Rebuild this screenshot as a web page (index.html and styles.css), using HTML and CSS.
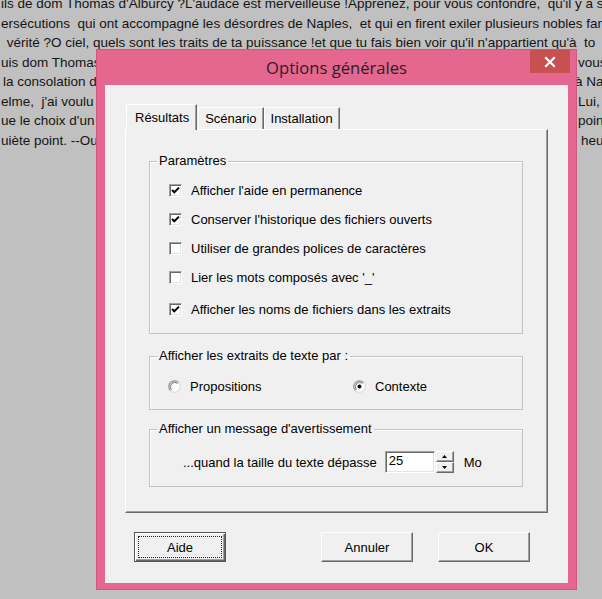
FILE: index.html
```html
<!DOCTYPE html>
<html lang="fr">
<head>
<meta charset="utf-8">
<title>Options générales</title>
<link rel="stylesheet" href="styles.css">
</head>
<body>
<div class="desk">
  <p class="line"><span class="lt">ils de dom Thomas d'Alburcy ?L'audace est merveilleuse !Apprenez, pour vous confondre,  qu'il y a s</span></p>
  <p class="line"><span class="lt">ersécutions  qui ont accompagné les désordres de Naples,  et qui en firent exiler plusieurs nobles fami</span></p>
  <p class="line"><span class="lt ind"> vérité ?O ciel, quels sont les traits de ta puissance !et que tu fais bien voir qu'il n'appartient qu'à  to</span></p>
  <p class="line split"><span class="lt">uis dom Thomas  de Piémont</span><span class="rt">vous</span></p>
  <p class="line split"><span class="lt ind">la consolation de vous</span><span class="rt early">à Na</span></p>
  <p class="line split"><span class="lt">elme,  j'ai voulu revoir</span><span class="rt">Lui,</span></p>
  <p class="line split"><span class="lt">ue le choix d'un époux</span><span class="rt">point</span></p>
  <p class="line split"><span class="lt">uiète point. --Oui, mon</span><span class="rt late">heu</span></p>
</div>

<div class="dialog">
  <div class="titlebar">
    <span class="spacer"></span>
    <span class="title">Options générales</span>
    <button class="close" type="button" aria-label="Fermer">
      <svg width="12" height="12" viewBox="0 0 12 12"><path d="M2 2L10 10M10 2L2 10" stroke="#fff" stroke-width="2.2" stroke-linecap="square"/></svg>
    </button>
  </div>
  <div class="client">
    <div class="tabs">
      <span class="tab sel">Résultats</span>
      <span class="tab">Scénario</span>
      <span class="tab">Installation</span>
    </div>
    <div class="panel">
      <fieldset class="group g1">
        <legend>Paramètres</legend>
        <div class="gbody">
          <div class="row"><span class="cb"><svg width="11" height="11" viewBox="0 0 11 11"><path d="M2 5L4.3 7.3L9 2.6" stroke="#000" stroke-width="2" fill="none"/></svg></span>Afficher l'aide en permanence</div>
          <div class="row"><span class="cb"><svg width="11" height="11" viewBox="0 0 11 11"><path d="M2 5L4.3 7.3L9 2.6" stroke="#000" stroke-width="2" fill="none"/></svg></span>Conserver l'historique des fichiers ouverts</div>
          <div class="row"><span class="cb"></span>Utiliser de grandes polices de caractères</div>
          <div class="row"><span class="cb"></span>Lier les mots composés avec '_'</div>
          <div class="row last"><span class="cb"><svg width="11" height="11" viewBox="0 0 11 11"><path d="M2 5L4.3 7.3L9 2.6" stroke="#000" stroke-width="2" fill="none"/></svg></span>Afficher les noms de fichiers dans les extraits</div>
        </div>
      </fieldset>
      <fieldset class="group g2">
        <legend>Afficher les extraits de texte par :</legend>
        <div class="gbody radios">
          <span class="radio"><svg width="13" height="13" viewBox="0 0 13 13"><circle cx="6.5" cy="6.5" r="5.8" fill="#fff" stroke="#dcdcdc" stroke-width="1.2"/><path d="M2.4 10.6A5.8 5.8 0 0 1 10.6 2.4" stroke="#9a9a9a" stroke-width="1.2" fill="none"/><path d="M3.4 9.6A4.4 4.4 0 0 1 9.6 3.4" stroke="#6e6e6e" fill="none"/></svg>Propositions</span>
          <span class="radio"><svg width="13" height="13" viewBox="0 0 13 13"><circle cx="6.5" cy="6.5" r="5.8" fill="#fff" stroke="#dcdcdc" stroke-width="1.2"/><path d="M2.4 10.6A5.8 5.8 0 0 1 10.6 2.4" stroke="#9a9a9a" stroke-width="1.2" fill="none"/><path d="M3.4 9.6A4.4 4.4 0 0 1 9.6 3.4" stroke="#6e6e6e" fill="none"/><circle cx="6.5" cy="6.5" r="2" fill="#000"/></svg>Contexte</span>
        </div>
      </fieldset>
      <fieldset class="group g3">
        <legend>Afficher un message d'avertissement</legend>
        <div class="gbody limit">
          <span class="lbl">...quand la taille du texte dépasse</span>
          <span class="field">25</span>
          <span class="spin">
            <span class="sb"><svg width="5" height="3" viewBox="0 0 5 3"><path d="M2.5 0L5 3H0z" fill="#000"/></svg></span>
            <span class="sb"><svg width="5" height="3" viewBox="0 0 5 3"><path d="M0 0H5L2.5 3z" fill="#000"/></svg></span>
          </span>
          <span class="unit">Mo</span>
        </div>
      </fieldset>
    </div>
    <div class="buttons">
      <button class="btn def" type="button"><span class="focus">Aide</span></button>
      <button class="btn annuler" type="button">Annuler</button>
      <button class="btn ok" type="button">OK</button>
    </div>
  </div>
</div>
</body>
</html>
```

FILE: styles.css
```css
html, body {
  margin: 0;
  padding: 0;
}
body {
  width: 602px;
  height: 599px;
  overflow: hidden;
  position: relative;
  background: #c0c0c0;
  font-family: "Liberation Sans", Arial, sans-serif;
  font-size: 13px;
  color: #000;
}

/* background document text */
.desk {
  margin-top: -6px;
  font-size: 13.5px;
}
.line {
  margin: 0;
  height: 19.5px;
  line-height: 19.5px;
  white-space: pre;
  overflow: hidden;
  color: #141414;
  padding-left: 1px;
}
.line.split {
  display: grid;
  grid-template-columns: 577px 1fr;
}
.lt.ind {
  padding-left: 2px;
}
.rt {
  overflow: hidden;
}
.rt.early {
  margin-left: -3px;
}
.rt.late {
  margin-left: 3px;
}

/* dialog window */
.dialog {
  position: absolute;
  left: 96px;
  top: 49px;
  width: 481px;
  height: 541px;
  box-sizing: border-box;
  background: #e5668f;
  border: 1px solid #d0577f;
  padding: 0 8px 6px 8px;
  display: flex;
  flex-direction: column;
}
.titlebar {
  height: 35px;
  margin: 0 -8px;
  display: grid;
  grid-template-columns: 1fr auto 1fr;
  align-items: center;
}
.title {
  font-family: "Open Sans", "Noto Sans", sans-serif;
  font-size: 16.6px;
  color: #2a1f24;
  padding-bottom: 1px;
}
.close {
  justify-self: end;
  align-self: start;
  width: 40px;
  height: 23px;
  margin-right: 6px;
  border: 0;
  padding: 0;
  background: #c75050;
  display: flex;
  align-items: center;
  justify-content: center;
}

.client {
  flex: 1;
  background: #f0f0f0;
  padding: 19px 0 0 20px;
  display: flex;
  flex-direction: column;
}

/* tabs */
.tabs {
  display: flex;
  align-items: flex-end;
  height: 25px;
  padding-left: 1px;
}
.tab {
  box-sizing: border-box;
  height: 22px;
  line-height: 21px;
  padding: 0 6px;
  background: #f0f0f0;
  border: 1px solid;
  border-bottom: 0;
  border-color: #fff #696969 transparent #fff;
  box-shadow: inset -1px 0 #a0a0a0;
}
.tab.sel {
  position: relative;
  z-index: 1;
  height: 26px;
  line-height: 25px;
  margin-bottom: -1px;
  margin-right: 1px;
  padding: 0 7px 0 8px;
}

.panel {
  box-sizing: border-box;
  width: 423px;
  height: 384px;
  border: 1px solid;
  border-color: #fff #696969 #696969 #fff;
  box-shadow: inset -1px -1px #a0a0a0;
  padding: 0 23px;
}

/* group boxes */
.group {
  margin: 0;
  padding: 0;
  min-inline-size: 0;
  width: 374px;
  box-sizing: border-box;
  border: 1px solid #c2c2c2;
  box-shadow: inset 1px 1px #fff;
}
.group legend {
  margin-left: 7px;
  padding: 0 2px;
  line-height: 14px;
  font-size: 13px;
}
.g1 {
  margin-top: 24px;
  padding: 8px 0 9px 0;
}
.g1 .gbody {
  padding-left: 19px;
}
.g2 {
  margin-top: 15px;
  padding: 13px 0 13px 0;
}
.g2 .gbody {
  padding-left: 18px;
}
.g3 {
  margin-top: 12px;
  padding: 15px 0 13px 0;
}
.g3 .gbody {
  padding-left: 33px;
}

.row {
  display: flex;
  align-items: center;
  height: 29px;
}
.row.last {
  margin-top: 3px;
}
.cb {
  box-sizing: border-box;
  width: 13px;
  height: 13px;
  margin-right: 9px;
  background: #fff;
  border: 1px solid;
  border-color: #a0a0a0 #fff #fff #a0a0a0;
  box-shadow: inset 1px 1px #696969, inset -1px -1px #e3e3e3;
  display: flex;
  align-items: center;
  justify-content: center;
  flex: none;
}
.cb svg {
  display: block;
}

.radios {
  display: grid;
  grid-template-columns: 185px auto;
  height: 20px;
  align-items: center;
}
.radio {
  display: flex;
  align-items: center;
}
.radio svg {
  margin-right: 9px;
  flex: none;
}

.limit {
  display: flex;
  align-items: center;
  height: 22px;
}
.lbl {
  margin-right: 8px;
}
.field {
  box-sizing: border-box;
  width: 50px;
  height: 22px;
  line-height: 18px;
  padding-left: 3px;
  background: #fff;
  border: 1px solid;
  border-color: #a0a0a0 #fff #fff #a0a0a0;
  box-shadow: inset 1px 1px #696969, inset -1px -1px #e3e3e3;
}
.spin {
  display: flex;
  flex-direction: column;
  width: 18px;
  height: 22px;
  margin-left: 1px;
  margin-right: 10px;
}
.sb {
  flex: 1;
  box-sizing: border-box;
  background: #f0f0f0;
  border: 1px solid;
  border-color: #fff #696969 #696969 #fff;
  box-shadow: inset -1px -1px #a0a0a0;
  display: flex;
  align-items: center;
  justify-content: center;
}
.sb svg {
  display: block;
}

/* bottom buttons */
.buttons {
  display: flex;
  margin-top: 19px;
  padding-left: 9px;
}
.btn {
  box-sizing: border-box;
  width: 92px;
  height: 30px;
  padding: 0;
  font-family: "Liberation Sans", Arial, sans-serif;
  font-size: 13px;
  color: #000;
  background: #f0f0f0;
  border: 1px solid;
  border-color: #fff #696969 #696969 #fff;
  box-shadow: inset -1px -1px #a0a0a0;
}
.btn.def {
  border: 1px solid #555;
  box-shadow: inset 1px 1px #fff, inset -1px -1px #696969, inset -2px -2px #a0a0a0;
  padding: 3px;
  display: flex;
}
.focus {
  flex: 1;
  border: 1px dotted #222;
  display: flex;
  align-items: center;
  justify-content: center;
}
.annuler {
  margin-left: 95px;
}
.ok {
  margin-left: 25px;
}
```
